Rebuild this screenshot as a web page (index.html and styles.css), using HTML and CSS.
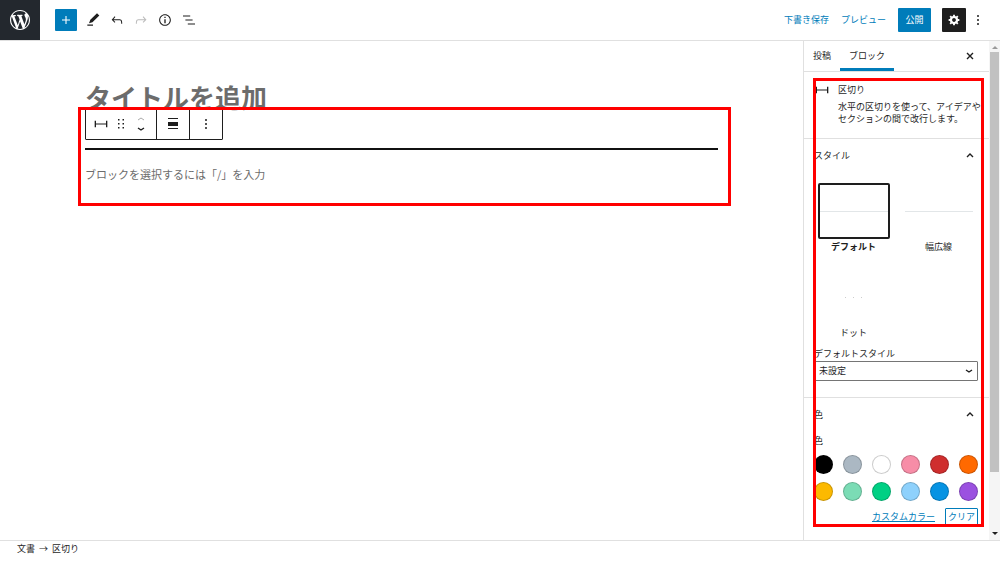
FILE: index.html
```html
<!DOCTYPE html>
<html lang="ja">
<head>
  <meta charset="UTF-8" />
  <meta name="viewport" content="width=device-width, initial-scale=1.0" />
  <title>新規投稿を追加</title>
  <link rel="stylesheet" href="styles.css">
</head>
<body>
  <header class="header">
    <a class="logo" href="#" aria-label="投稿一覧">
      <svg width="20" height="20" viewBox="0 0 20 20"><path d="M20 10c0-5.51-4.49-10-10-10C4.48 0 0 4.49 0 10c0 5.52 4.48 10 10 10 5.51 0 10-4.48 10-10zM7.78 15.37L4.37 6.22c.55-.02 1.17-.08 1.17-.08.5-.06.44-1.13-.06-1.11 0 0-1.45.11-2.37.11-.18 0-.37 0-.58-.01C4.12 2.69 6.87 1.11 10 1.11c2.33 0 4.45.87 6.05 2.34-.68-.11-1.65.39-1.65 1.58 0 .74.45 1.36.9 2.1.35.61.55 1.36.55 2.46 0 1.49-1.4 5-1.4 5l-3.03-8.37c.54-.02.82-.17.82-.17.5-.05.44-1.25-.06-1.22 0 0-1.44.12-2.38.12-.87 0-2.33-.12-2.33-.12-.5-.03-.56 1.2-.06 1.22l.92.08 1.26 3.41zM17.41 10c.24-.64.74-1.87.43-4.25.7 1.29 1.05 2.71 1.05 4.25 0 3.29-1.73 6.24-4.4 7.78.97-2.59 1.94-5.2 2.92-7.78zM6.1 18.09C3.12 16.65 1.11 13.53 1.11 10c0-1.3.23-2.48.72-3.59C3.25 10.3 4.67 14.2 6.1 18.09zm4.03-6.63l2.58 6.98c-.86.29-1.76.45-2.71.45-.79 0-1.57-.11-2.29-.33.81-2.38 1.62-4.74 2.42-7.1z"/></svg>
    </a>
    <div class="tools">
      <button class="add" aria-label="ブロックを追加"><svg width="16" height="16" viewBox="0 0 24 24"><path d="M18 11.2h-5.2V6h-1.6v5.2H6v1.6h5.2V18h1.6v-5.2H18z"/></svg></button>
      <button class="icon-btn" aria-label="ツール"><svg width="16" height="16" viewBox="0 0 24 24"><path d="M21.5 5.400L18 2 8 11.800l-2 5.200 5.200-1.600L21.500 5.400zM3.500 20.800h8.500v-1.900H3.500v1.900z"/></svg></button>
      <button class="icon-btn" aria-label="元に戻す"><svg width="16" height="16" viewBox="0 0 24 24"><path d="M18.3 11.7c-.6-.6-1.4-.9-2.3-.9H6.700l2.900-3.300-1.100-1-4.500 5L8.500 16l1-1-2.700-2.700H16c.5 0 .9.2 1.300.5 1 1 1 3.400 1 4.500v.3h1.500v-.2c0-1.500 0-4.300-1.500-5.700z"/></svg></button>
      <button class="icon-btn" aria-label="やり直す" disabled><svg width="16" height="16" viewBox="0 0 24 24"><path d="M15.6 6.5l-1.100 1 2.900 3.300H8c-.9 0-1.700.3-2.300.9-1.400 1.500-1.400 4.200-1.400 5.600v.2h1.500v-.3c0-1.100 0-3.500 1-4.500.3-.3.7-.5 1.300-.5h9.200L14.500 15l1.100 1.100 4.600-4.600-4.600-5z"/></svg></button>
      <button class="icon-btn" aria-label="詳細"><svg width="16" height="16" viewBox="0 0 24 24"><path d="M12 3.2c-4.800 0-8.800 3.900-8.800 8.800 0 4.800 3.900 8.800 8.800 8.800 4.800 0 8.800-3.900 8.800-8.800 0-4.800-4-8.800-8.800-8.800zm0 16c-4 0-7.200-3.300-7.200-7.200C4.800 8 8 4.800 12 4.800s7.200 3.300 7.200 7.200c0 4-3.200 7.200-7.200 7.200zM11 17h2v-6h-2v6zm0-8h2V7h-2v2z"/></svg></button>
      <button class="icon-btn" aria-label="リスト表示"><svg width="16" height="16" viewBox="0 0 24 24"><path d="M13.8 5.200H3v1.500h10.800V5.200zm-3.600 12v1.500H21v-1.500H10.200zm7.200-6H6.600v1.500h10.800v-1.500z"/></svg></button>
    </div>
    <div class="actions">
      <button class="link-btn">下書き保存</button>
      <button class="link-btn">プレビュー</button>
      <button class="publish">公開</button>
      <button class="settings" aria-label="設定"><svg width="12" height="12" viewBox="0 1 19 19"><path d="M18 12h-2.180c-.17.7-.44 1.350-.81 1.930l1.540 1.540-2.100 2.100-1.540-1.540c-.58.36-1.230.63-1.910.79V19H8v-2.180c-.68-.16-1.330-.43-1.910-.79l-1.540 1.540-2.120-2.120 1.540-1.540c-.36-.58-.63-1.230-.79-1.910H1V9.030h2.170c.16-.7.44-1.350.8-1.940L2.430 5.550l2.100-2.100 1.540 1.540c.58-.37 1.240-.64 1.930-.81V2h3v2.180c.68.16 1.330.43 1.910.79l1.540-1.540 2.120 2.120-1.540 1.540c.36.59.64 1.240.8 1.940H18V12zm-8.500 1.500c1.660 0 3-1.340 3-3s-1.340-3-3-3-3 1.340-3 3 1.340 3 3 3z"/></svg></button>
      <button class="more" aria-label="オプション"><svg width="4" height="12" viewBox="0 0 4 12"><circle cx="2" cy="2" r="1"/><circle cx="2" cy="6" r="1"/><circle cx="2" cy="10" r="1"/></svg></button>
    </div>
  </header>

  <div class="workspace">
    <main class="canvas">
      <h1 class="post-title">タイトルを追加</h1>
      <div class="blocks">
        <div class="toolbar" role="toolbar" aria-label="ブロックツール">
          <div class="group">
            <button aria-label="区切り"><svg width="16" height="16" viewBox="0 0 24 24"><path d="M4.500 12.800v4H2.500V7.200h2v4h15v-4h2v9.600h-2v-4h-15z"/></svg></button>
            <button aria-label="ドラッグ"><svg width="8" height="12" viewBox="0 0 8 12"><path d="M1 1h1.500v1.500H1zM5.500 1H7v1.500H5.500zM1 5h1.500v1.500H1zM5.500 5H7v1.500H5.500zM1 9h1.500v1.500H1zM5.500 9H7v1.500H5.500z"/></svg></button>
            <button aria-label="移動"><svg class="mover" width="10" height="18" viewBox="0 0 10 18"><path class="dim" d="M2 5l3-2 3 2"/><path d="M2 13l3 2 3-2"/></svg></button>
          </div>
          <div class="group">
            <button aria-label="配置"><svg width="12" height="12" viewBox="0 0 12 12"><path d="M1 0h10v1H1zM1 4h10v4H1zM1 10h10v1H1z"/></svg></button>
          </div>
          <div class="group">
            <button aria-label="オプション"><svg width="4" height="12" viewBox="0 0 4 12"><circle cx="2" cy="2" r="1"/><circle cx="2" cy="6" r="1"/><circle cx="2" cy="10" r="1"/></svg></button>
          </div>
        </div>
        <hr class="separator">
        <p class="placeholder">ブロックを選択するには「/」を入力</p>
        <div class="mark mark-blocks"></div>
      </div>
    </main>

    <aside class="sidebar">
      <div class="sidebar-body">
        <div class="tabs">
          <button class="tab">投稿</button>
          <button class="tab active">ブロック</button>
          <button class="close" aria-label="閉じる"><svg width="8" height="8" viewBox="0 0 8 8"><path d="M1 1l6 6M7 1L1 7"/></svg></button>
        </div>
        <div class="inspector">
          <section class="card">
            <svg width="16" height="16" viewBox="0 0 24 24"><path d="M4.500 12.800v4H2.500V7.200h2v4h15v-4h2v9.600h-2v-4h-15z"/></svg>
            <div>
              <h2>区切り</h2>
              <p>水平の区切りを使って、アイデアやセクションの間で改行します。</p>
            </div>
          </section>

          <section class="panel">
            <button class="panel-title">スタイル<svg width="8" height="6" viewBox="0 0 8 6"><path d="M1 4l3-3 3 3"/></svg></button>
            <div class="styles">
              <button class="style selected"><span class="preview"><span class="rule"></span></span>デフォルト</button>
              <button class="style"><span class="preview"><span class="rule"></span></span>幅広線</button>
              <button class="style"><span class="preview"><span class="dots"><i></i><i></i><i></i></span></span>ドット</button>
            </div>
            <label class="field-label" for="default-style">デフォルトスタイル</label>
            <div class="select-wrap">
              <select id="default-style">
                <option>未設定</option>
                <option>デフォルト</option>
                <option>幅広線</option>
                <option>ドット</option>
              </select>
              <svg width="8" height="6" viewBox="0 0 8 6"><path d="M1 2l3 2 3-2"/></svg>
            </div>
          </section>

          <section class="panel">
            <button class="panel-title">色<svg width="8" height="6" viewBox="0 0 8 6"><path d="M1 4l3-3 3 3"/></svg></button>
            <p class="color-label">色</p>
            <div class="swatches">
              <button class="swatch black" aria-label="黒"></button>
              <button class="swatch gray" aria-label="グレー"></button>
              <button class="swatch white" aria-label="白"></button>
              <button class="swatch pink" aria-label="ピンク"></button>
              <button class="swatch red" aria-label="赤"></button>
              <button class="swatch orange" aria-label="オレンジ"></button>
              <button class="swatch amber" aria-label="黄"></button>
              <button class="swatch mint" aria-label="薄緑"></button>
              <button class="swatch green" aria-label="緑"></button>
              <button class="swatch sky" aria-label="水色"></button>
              <button class="swatch blue" aria-label="青"></button>
              <button class="swatch purple" aria-label="紫"></button>
            </div>
            <div class="color-actions">
              <a href="#">カスタムカラー</a>
              <button class="clear">クリア</button>
            </div>
          </section>
          <div class="mark mark-inspector"></div>
        </div>
      </div>
      <div class="scrollbar" aria-hidden="true">
        <svg width="6" height="4" viewBox="0 0 6 4"><path class="off" d="M0 4l3-3 3 3z"/></svg>
        <div class="track"><div class="thumb"></div></div>
        <svg width="6" height="4" viewBox="0 0 6 4"><path d="M0 0l3 3 3-3z"/></svg>
      </div>
    </aside>
  </div>

  <footer class="footer">
    <a href="#">文書</a>
    <span>→</span>
    <a href="#">区切り</a>
  </footer>
</body>
</html>
```

FILE: styles.css
```css
* {
  box-sizing: border-box;
}
body {
  margin: 0;
  min-height: 100vh;
  display: flex;
  flex-direction: column;
  background: #fff;
  color: #1e1e1e;
  font-family: "Noto Sans CJK JP", sans-serif;
  font-size: 9px;
  line-height: 12px;
}
h1, h2, p {
  margin: 0;
}
button {
  display: flex;
  align-items: center;
  justify-content: center;
  padding: 0;
  border: none;
  background: none;
  color: inherit;
  font: inherit;
  cursor: pointer;
}
svg {
  display: block;
  flex: none;
  fill: currentColor;
}

/* header */
.header {
  display: flex;
  align-items: center;
  height: 41px;
  padding-right: 15px;
  border-bottom: 1px solid #e0e0e0;
}
.logo {
  display: flex;
  align-items: center;
  justify-content: center;
  width: 40px;
  height: 40px;
  background: #23282e;
  color: #fff;
}
.tools {
  display: flex;
  align-items: center;
  margin-left: 15px;
}
.add {
  width: 22px;
  height: 22px;
  margin-right: 4px;
  background: #007cba;
  border-radius: 1px;
  color: #fff;
}
.icon-btn {
  width: 24px;
  height: 24px;
}
.icon-btn:disabled {
  color: #bbb;
}
.actions {
  display: flex;
  align-items: center;
  margin-left: auto;
}
.link-btn {
  margin-right: 12px;
  color: #007cba;
}
.publish, .settings {
  height: 24px;
  border-radius: 1px;
  color: #fff;
}
.publish {
  width: 33px;
  margin-right: 11px;
  background: #007cba;
}
.settings {
  width: 24px;
  background: #1e1e1e;
}
.more {
  width: 14px;
  height: 24px;
  margin-left: 5px;
}

/* canvas */
.workspace {
  display: flex;
  flex: 1;
}
.canvas {
  flex: 1;
  padding: 38px 85px 0;
}
.post-title {
  height: 28px;
  color: #6c6c6c;
  font-size: 26px;
  line-height: 36px;
  font-weight: 700;
}
.blocks {
  position: relative;
}
.toolbar {
  position: relative;
  display: flex;
  width: max-content;
  height: 33px;
  background: #fff;
  border: 1px solid #1e1e1e;
  border-radius: 1px;
}
.group {
  display: flex;
  align-items: center;
  justify-content: center;
  min-width: 33px;
  padding: 0 5px;
}
.group + .group {
  border-left: 1px solid #1e1e1e;
}
.group button {
  width: 20px;
  height: 30px;
}
.mover path {
  fill: none;
  stroke: #1e1e1e;
  stroke-width: 1.4;
}
.mover .dim {
  stroke: #aaa;
  stroke-width: 1;
}
.separator {
  margin: 8px 0 0;
  border: none;
  border-top: 2px solid #111;
}
.placeholder {
  padding: 16px 0 24px;
  color: #6c6c6c;
  font-size: 11px;
  line-height: 16px;
}

/* red frames around the explained areas */
.mark {
  position: absolute;
  border: 3px solid #f00;
  pointer-events: none;
}
.mark-blocks {
  inset: 0 -13px 0 -7px;
}
.mark-inspector {
  inset: 6px 5px 13px 9px;
}

/* sidebar */
.sidebar {
  display: flex;
  width: 197px;
  border-left: 1px solid #e0e0e0;
}
.sidebar-body {
  flex: 1;
}
.tabs {
  display: flex;
  height: 31px;
  border-bottom: 1px solid #e0e0e0;
}
.tab {
  padding: 3px 9px 0;
  border-bottom: 3px solid transparent;
}
.tab.active {
  border-bottom-color: #007cba;
}
.close {
  width: 20px;
  margin-left: auto;
  margin-right: 9px;
}
.close path, .panel-title path, .select-wrap path {
  fill: none;
  stroke: #1e1e1e;
  stroke-width: 1.4;
}
.inspector {
  position: relative;
}
.card {
  display: flex;
  gap: 8px;
  padding: 12px 0 13px 10px;
}
.card svg {
  margin-top: -2px;
}
.card h2 {
  margin-bottom: 5px;
  font-size: 9px;
  line-height: 12px;
  font-weight: 400;
}
.panel {
  padding: 0 11px 0 10px;
  border-top: 1px solid #e0e0e0;
}
.panel-title {
  width: 100%;
  height: 33px;
  padding-right: 4px;
  justify-content: space-between;
}
.styles {
  display: grid;
  grid-template-columns: 1fr 1fr;
  row-gap: 16px;
  margin: 11px -3px 0;
}
.style {
  flex-direction: column;
  gap: 2px;
  line-height: 12px;
}
.preview {
  display: flex;
  align-items: center;
  justify-content: center;
  width: 72px;
  height: 56px;
  border: 2px solid transparent;
  border-radius: 2px;
}
.selected {
  font-weight: 700;
}
.selected .preview {
  border-color: #1e1e1e;
}
.rule {
  width: 100%;
  height: 1px;
  background: #e2e6e8;
}
.dots {
  display: flex;
  gap: 7px;
}
.dots i {
  width: 1px;
  height: 1px;
  background: #ccc;
}
.field-label {
  display: block;
  margin: 9px 0 1px;
}
.select-wrap {
  display: grid;
  align-items: center;
  margin-bottom: 16px;
}
.select-wrap select, .select-wrap svg {
  grid-area: 1 / 1;
}
.select-wrap select {
  width: 100%;
  height: 20px;
  padding: 0 4px;
  appearance: none;
  background: #fff;
  border: 1px solid #757575;
  border-radius: 1px;
  color: #1e1e1e;
  font: inherit;
}
.select-wrap svg {
  justify-self: end;
  margin-right: 5px;
  pointer-events: none;
}
.color-label {
  margin: 4px 0 8px;
}
.swatches {
  display: grid;
  grid-template-columns: repeat(6, 19px);
  justify-content: space-between;
  row-gap: 8px;
}
.swatch {
  height: 19px;
  border: 1px solid rgba(0, 0, 0, 0.2);
  border-radius: 50%;
}
.black { background: #000; }
.gray { background: #abb8c3; }
.white { background: #fff; }
.pink { background: #f78da7; }
.red { background: #cf2e2e; }
.orange { background: #ff6900; }
.amber { background: #fcb900; }
.mint { background: #7bdcb5; }
.green { background: #00d084; }
.sky { background: #8ed1fc; }
.blue { background: #0693e3; }
.purple { background: #9b51e0; }
.color-actions {
  display: flex;
  align-items: center;
  justify-content: flex-end;
  gap: 10px;
  margin-top: 7px;
  padding-bottom: 15px;
}
.color-actions a {
  color: #007cba;
}
.clear {
  width: 33px;
  height: 17px;
  border: 1px solid #007cba;
  border-radius: 1px;
  color: #007cba;
}
.scrollbar {
  display: flex;
  flex-direction: column;
  align-items: center;
  width: 11px;
  padding: 4px 0;
  background: #f5f5f5;
}
.scrollbar .off {
  fill: #999;
}
.track {
  flex: 1;
  align-self: stretch;
  margin: 3px 1px;
}
.thumb {
  height: 88%;
  background: #c1c1c1;
}

/* footer */
.footer {
  display: flex;
  gap: 4px;
  height: 38px;
  padding: 2px 17px;
  border-top: 1px solid #e0e0e0;
}
.footer a {
  color: inherit;
  text-decoration: none;
}
```
